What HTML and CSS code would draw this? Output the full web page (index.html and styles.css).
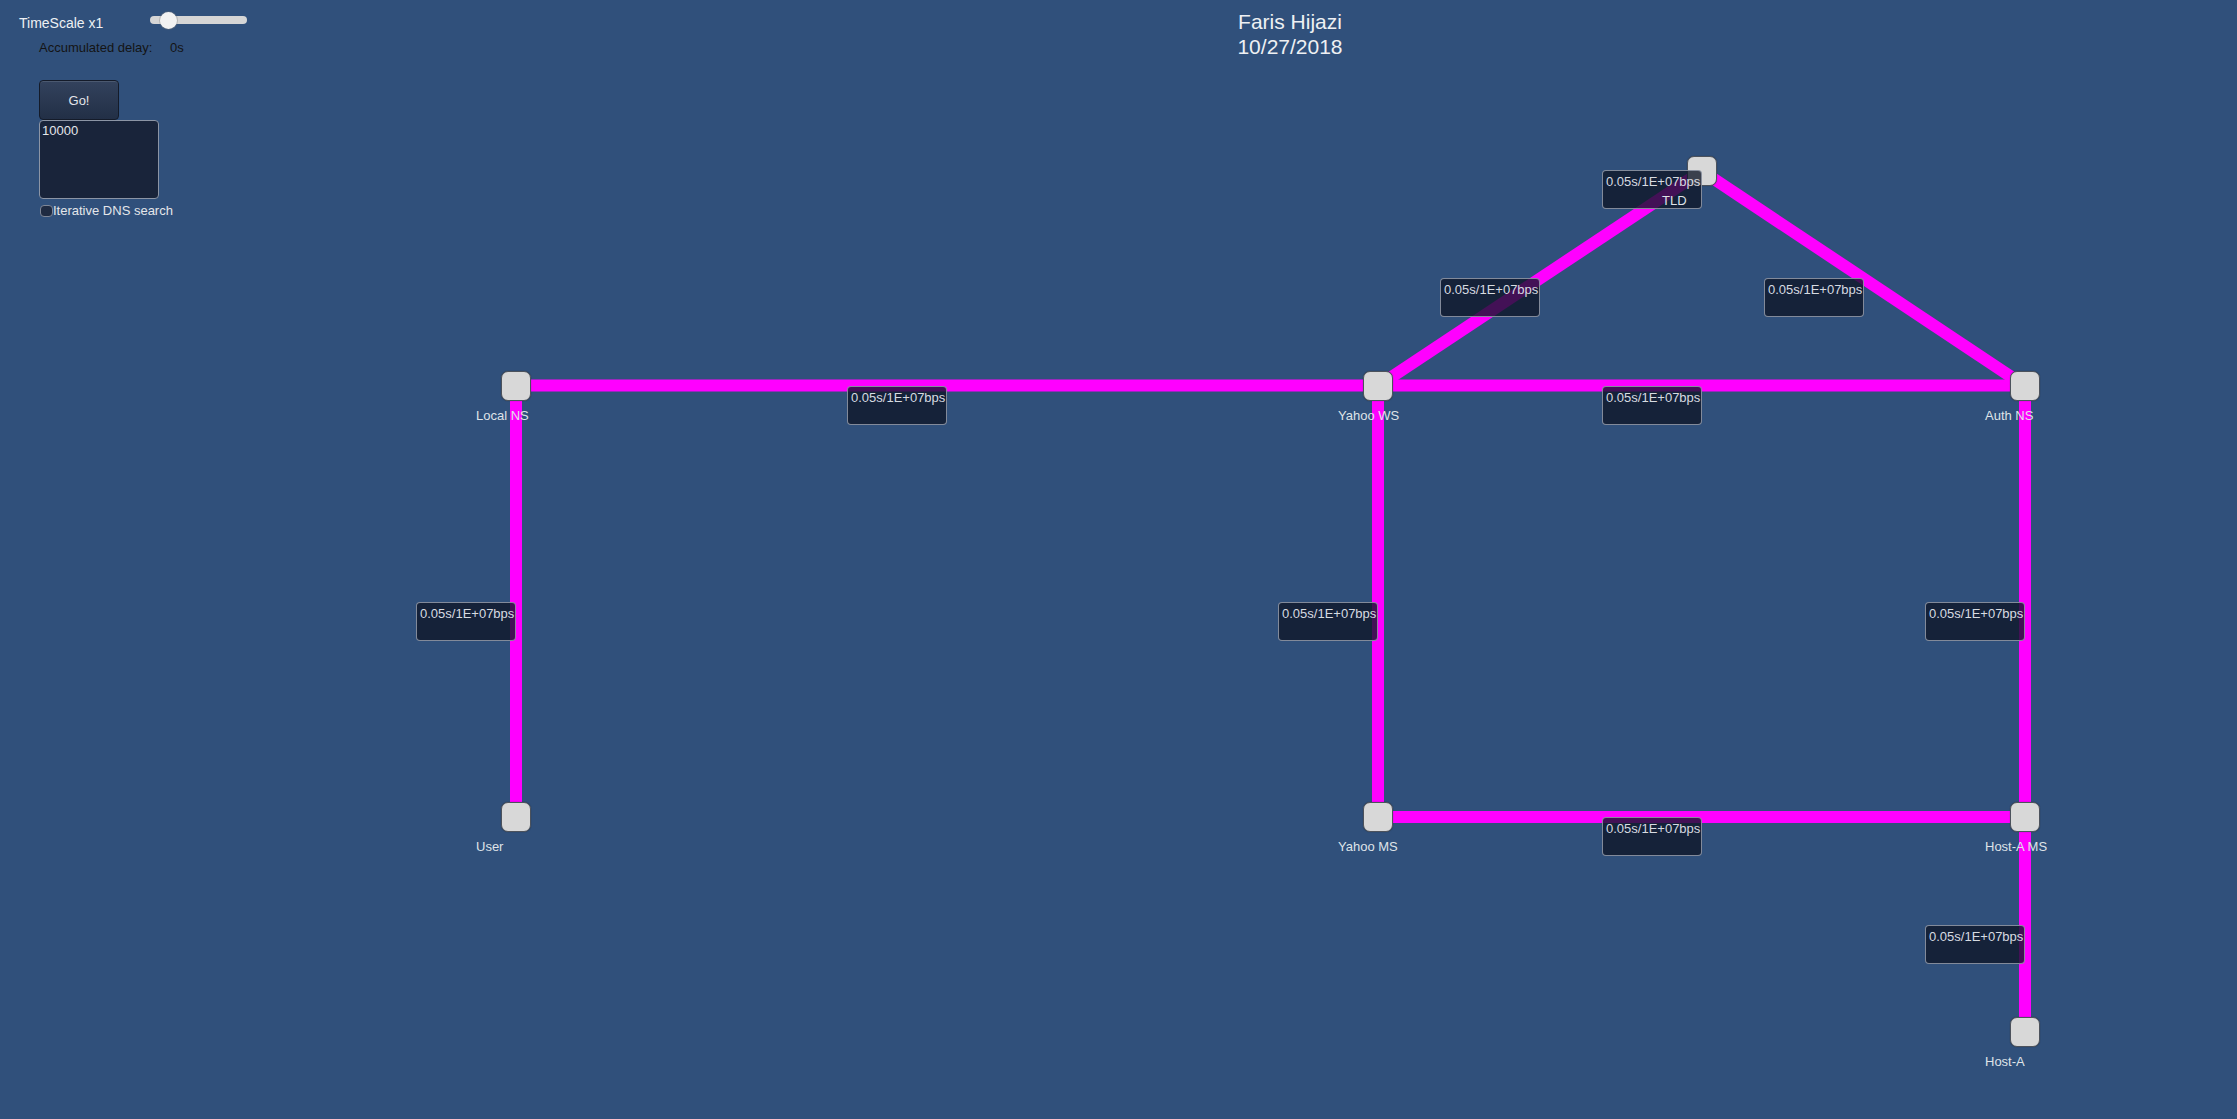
FILE: index.html
```html
<!DOCTYPE html>
<html>
<head>
<meta charset="utf-8">
<title>DNS network</title>
<link rel="stylesheet" href="styles.css">
</head>
<body>
<div class="screen">
  <div class="hud">
    <div class="controls">
      <div class="row timescale">
        <span class="ts-label">TimeScale x1</span>
        <div class="slider"><div class="track"></div><div class="thumb"></div></div>
      </div>
      <div class="row delay">
        <span class="delay-label">Accumulated delay:</span><span class="delay-val">0s</span>
      </div>
      <button class="go">Go!</button>
      <div class="textarea">10000</div>
      <label class="check"><span class="checkbox"></span><span>Iterative DNS search</span></label>
    </div>
    <div class="title">Faris Hijazi<br>10/27/2018</div>
  </div>

  <div class="graph">
    <svg class="links" width="2237" height="1119" viewBox="0 0 2237 1119">
      <g stroke="#ff00ff" stroke-width="12" fill="none">
        <line x1="516" y1="385.5" x2="1378" y2="385.5"/>
        <line x1="1378" y1="385.5" x2="2025" y2="385.5"/>
        <line x1="1378" y1="386" x2="1702" y2="171"/>
        <line x1="1702" y1="171" x2="2025" y2="386"/>
        <line x1="516" y1="386" x2="516" y2="817"/>
        <line x1="1378" y1="386" x2="1378" y2="817"/>
        <line x1="2025" y1="386" x2="2025" y2="817"/>
        <line x1="1378" y1="817" x2="2025" y2="817"/>
        <line x1="2025" y1="817" x2="2025" y2="1032"/>
      </g>
    </svg>

    <div class="node" style="left:501px;top:371px"></div>
    <div class="node" style="left:1363px;top:371px"></div>
    <div class="node" style="left:2010px;top:371px"></div>
    <div class="node" style="left:1687px;top:156px"></div>
    <div class="node" style="left:501px;top:802px"></div>
    <div class="node" style="left:1363px;top:802px"></div>
    <div class="node" style="left:2010px;top:802px"></div>
    <div class="node" style="left:2010px;top:1017px"></div>

    <div class="linkbox" style="left:847px;top:386px"><span class="lt">0.05s/1E+07bps</span></div>
    <div class="linkbox" style="left:1602px;top:386px"><span class="lt">0.05s/1E+07bps</span></div>
    <div class="linkbox" style="left:1440px;top:278px"><span class="lt">0.05s/1E+07bps</span></div>
    <div class="linkbox" style="left:1764px;top:278px"><span class="lt">0.05s/1E+07bps</span></div>
    <div class="linkbox" style="left:1602px;top:170px"><span class="lt">0.05s/1E+07bps</span></div>
    <div class="linkbox" style="left:416px;top:602px"><span class="lt">0.05s/1E+07bps</span></div>
    <div class="linkbox" style="left:1278px;top:602px"><span class="lt">0.05s/1E+07bps</span></div>
    <div class="linkbox" style="left:1925px;top:602px"><span class="lt">0.05s/1E+07bps</span></div>
    <div class="linkbox" style="left:1602px;top:817px"><span class="lt">0.05s/1E+07bps</span></div>
    <div class="linkbox" style="left:1925px;top:925px"><span class="lt">0.05s/1E+07bps</span></div>

    <span class="nlabel" style="left:476px;top:408px">Local NS</span>
    <span class="nlabel" style="left:1338px;top:408px">Yahoo WS</span>
    <span class="nlabel" style="left:1985px;top:408px">Auth NS</span>
    <span class="nlabel" style="left:1662px;top:193px">TLD</span>
    <span class="nlabel" style="left:476px;top:839px">User</span>
    <span class="nlabel" style="left:1338px;top:839px">Yahoo MS</span>
    <span class="nlabel" style="left:1985px;top:839px">Host-A MS</span>
    <span class="nlabel" style="left:1985px;top:1054px">Host-A</span>
  </div>
</div>
</body>
</html>
```
FILE: styles.css
```css
* { box-sizing: border-box; }
html, body { margin: 0; padding: 0; }
body {
  background: #30507b;
  font-family: "Liberation Sans", Arial, sans-serif;
  overflow: hidden;
}
.screen {
  position: relative;
  width: 2237px;
  height: 1119px;
  background: #30507b;
  overflow: hidden;
}
.hud {
  position: relative;
  z-index: 10;
  display: grid;
  grid-template-columns: 1190px 200px;
}
.controls {
  padding-top: 12px;
  display: flex;
  flex-direction: column;
  align-items: flex-start;
}
.row { display: flex; }
.timescale {
  display: grid;
  grid-template-columns: 150px 97px;
  height: 18px;
}
.ts-label {
  padding-left: 19px;
  padding-top: 3px;
  font-size: 14px;
  line-height: 16px;
  color: #eef0f3;
  white-space: nowrap;
}
.slider {
  position: relative;
  height: 18px;
}
.track {
  margin-top: 4px;
  height: 8px;
  border-radius: 4px;
  background: #d6d6d6;
}
.thumb {
  position: absolute;
  left: 10px;
  top: 0;
  width: 17px;
  height: 17px;
  border-radius: 50%;
  background: #f2f2f2;
  box-shadow: 0 0 0 1px rgba(120,120,120,0.35);
}
.delay {
  margin-top: 10px;
  font-size: 13px;
  line-height: 15px;
  color: #141414;
}
.delay-label {
  margin-left: 39px;
  width: 131px;
  white-space: nowrap;
}
.go {
  margin: 25px 0 0 39px;
  width: 80px;
  height: 40px;
  padding: 0;
  border: 1px solid #141b29;
  border-radius: 4px;
  background: linear-gradient(#33425d, #222f46);
  box-shadow: inset 0 1px 0 rgba(255,255,255,0.12);
  color: #e4e6ea;
  font-family: "Liberation Sans", Arial, sans-serif;
  font-size: 13px;
}
.textarea {
  margin-left: 39px;
  width: 120px;
  height: 79px;
  padding: 2px 2px;
  border: 1px solid #8c95a5;
  border-radius: 4px;
  background: #19243a;
  color: #e4e6ea;
  font-size: 13px;
  line-height: 15px;
}
.check {
  margin: 4px 0 0 40px;
  display: flex;
  align-items: flex-start;
  font-size: 13px;
  line-height: 15px;
  color: #e4e6ea;
}
.checkbox {
  margin-top: 2px;
  width: 13px;
  height: 12px;
  border: 1px solid #7d8697;
  border-radius: 4px;
  background: #1f2b42;
}
.title {
  margin-top: 9px;
  text-align: center;
  font-size: 21px;
  line-height: 25px;
  color: #eef0f3;
}
.graph {
  position: absolute;
  left: 0;
  top: 0;
  width: 2237px;
  height: 1119px;
}
.links {
  position: absolute;
  left: 0;
  top: 0;
}
.node {
  position: absolute;
  z-index: 1;
  width: 30px;
  height: 30px;
  border: 1px solid #4c525c;
  border-radius: 7px;
  background: #d8d8d8;
  box-shadow: 0 0 1px rgba(30,30,30,0.6);
}
.linkbox {
  position: absolute;
  z-index: 2;
  width: 100px;
  height: 39px;
  padding: 3px 0 0 3px;
  border: 1px solid rgba(150,158,172,0.85);
  border-radius: 4px;
  background: rgba(14,22,38,0.78);
}
.lt {
  display: block;
  font-size: 13px;
  line-height: 15px;
  color: #d7dbe1;
  white-space: nowrap;
}
.nlabel {
  position: absolute;
  z-index: 4;
  font-size: 13px;
  line-height: 15px;
  color: #dfe3e8;
  white-space: nowrap;
}
```
